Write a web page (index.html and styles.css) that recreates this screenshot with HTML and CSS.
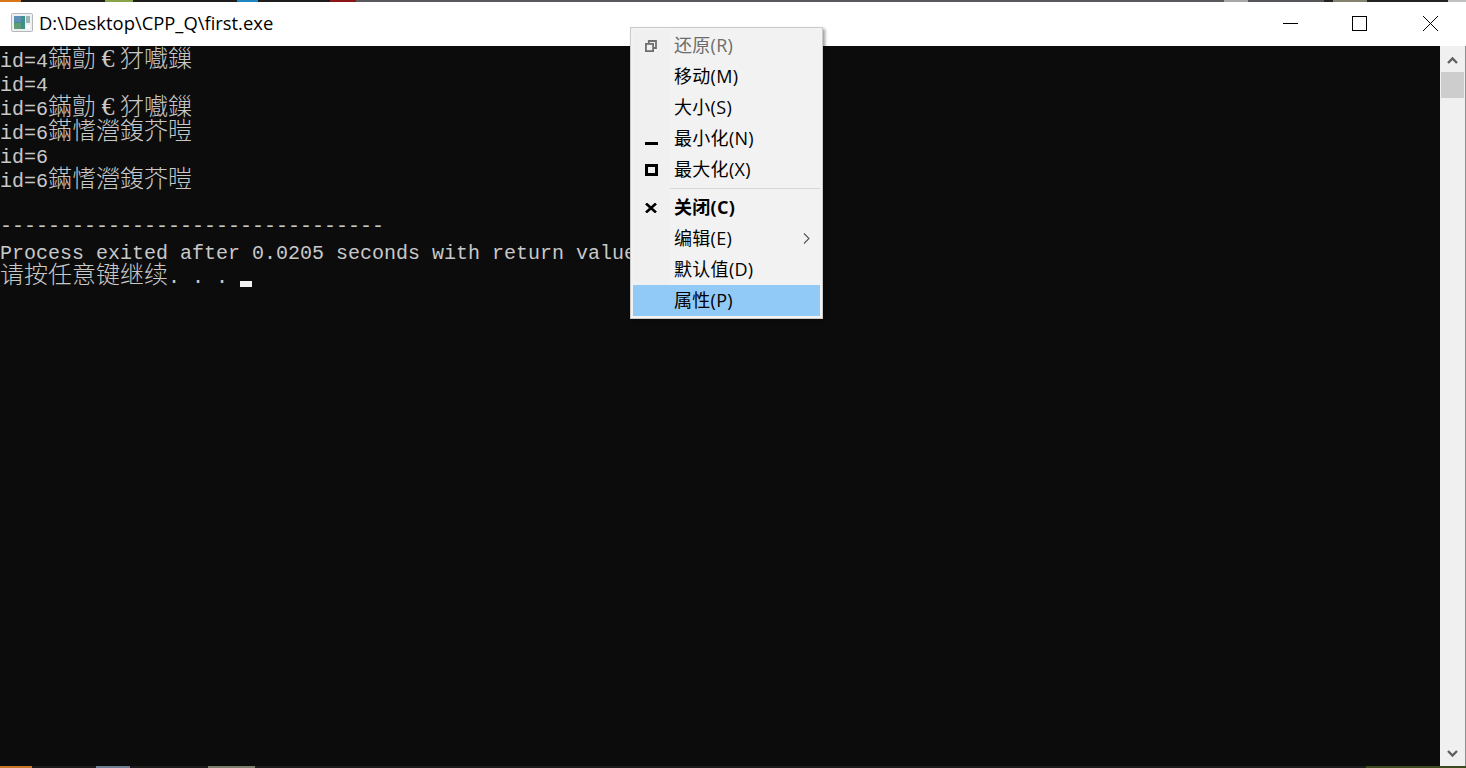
FILE: index.html
```html
<!DOCTYPE html>
<html lang="zh-CN">
<head>
<meta charset="utf-8">
<title>first.exe</title>
<link rel="stylesheet" href="styles.css">
</head>
<body>
<div class="window">
  <div class="strip strip-top"></div>
  <header class="titlebar">
    <svg class="app-icon" width="23" height="20" viewBox="0 0 23 20">
      <rect x="0.5" y="0.5" width="21" height="18" rx="1" fill="#eef0f2" stroke="#b4b8bc"/>
      <rect x="3" y="3" width="11" height="13" fill="#3f8f8c"/>
      <rect x="3" y="3" width="7" height="6" fill="#5f8fb5"/>
      <rect x="3" y="10" width="7" height="6" fill="#5e9e74"/>
      <rect x="15" y="3" width="4" height="7" fill="#9ab9b4"/>
      <rect x="15" y="12" width="4" height="4" fill="#ffffff"/>
    </svg>
    <span class="title">D:\Desktop\CPP_Q\first.exe</span>
    <div class="controls">
      <svg class="ctl" width="15" height="15" viewBox="0 0 15 15"><path d="M0 7.5H15" stroke="#000" fill="none"/></svg>
      <svg class="ctl ctl-max" width="15" height="15" viewBox="0 0 15 15"><rect x="0.5" y="0.5" width="14" height="14" fill="none" stroke="#000"/></svg>
      <svg class="ctl ctl-close" width="15" height="15" viewBox="0 0 15 15"><path d="M0 0L15 15M15 0L0 15" stroke="#000" fill="none"/></svg>
    </div>
  </header>
  <main class="body">
    <div class="console">
      <div class="line">id=4<span class="cjk">鏋勯</span><span class="wide">€</span><span class="cjk">犲嚱鏁</span></div>
      <div class="line">id=4</div>
      <div class="line">id=6<span class="cjk">鏋勯</span><span class="wide">€</span><span class="cjk">犲嚱鏁</span></div>
      <div class="line">id=6<span class="cjk">鏋愭瀯鍑芥暟</span></div>
      <div class="line">id=6</div>
      <div class="line">id=6<span class="cjk">鏋愭瀯鍑芥暟</span></div>
      <div class="line"></div>
      <div class="line"><span class="rule">--------------------------------</span></div>
      <div class="line">Process exited after 0.0205 seconds with return value 0</div>
      <div class="line"><span class="cjk">请按任意键继续</span>. . . <span class="cursor"></span></div>
    </div>
    <aside class="scrollbar">
      <svg class="arrow" width="11" height="9" viewBox="0 0 11 9"><path d="M1 7L5.5 2.5L10 7" fill="none" stroke="#606060" stroke-width="2.4"/></svg>
      <div class="thumb"></div>
      <svg class="arrow arrow-down" width="11" height="9" viewBox="0 0 11 9"><path d="M1 2L5.5 6.5L10 2" fill="none" stroke="#606060" stroke-width="2.4"/></svg>
    </aside>
  </main>
  <div class="strip strip-bottom"></div>

  <nav class="menu">
    <div class="item disabled">
      <span class="gutter"><svg width="12" height="12" viewBox="0 0 12 12"><path d="M3.8 3V1H11V8H9" fill="none" stroke="#707070" stroke-width="1.8"/><rect x="0.9" y="3.9" width="7.2" height="7.2" fill="none" stroke="#707070" stroke-width="1.8"/></svg></span>
      <span class="label">还原(R)</span>
    </div>
    <div class="item"><span class="gutter"></span><span class="label">移动(M)</span></div>
    <div class="item"><span class="gutter"></span><span class="label">大小(S)</span></div>
    <div class="item">
      <span class="gutter"><svg class="i-min" width="13" height="3" viewBox="0 0 13 3"><rect width="13" height="3" fill="#000"/></svg></span>
      <span class="label">最小化(N)</span>
    </div>
    <div class="item">
      <span class="gutter"><svg width="13" height="12" viewBox="0 0 13 12"><rect x="1.5" y="1.5" width="10" height="9" fill="none" stroke="#000" stroke-width="3"/></svg></span>
      <span class="label">最大化(X)</span>
    </div>
    <div class="sep"><span class="sep-gutter"></span><span class="sep-line"></span></div>
    <div class="item">
      <span class="gutter"><svg width="12" height="10" viewBox="0 0 12 10"><path d="M1 0.5L11 9.5M11 0.5L1 9.5" fill="none" stroke="#000" stroke-width="2.6"/></svg></span>
      <span class="label bold">关闭(C)</span>
    </div>
    <div class="item">
      <span class="gutter"></span><span class="label">编辑(E)</span>
      <svg class="sub" width="7" height="11" viewBox="0 0 7 11"><path d="M1 0.5L6 5.5L1 10.5" fill="none" stroke="#555" stroke-width="1.1"/></svg>
    </div>
    <div class="item"><span class="gutter"></span><span class="label">默认值(D)</span></div>
    <div class="item active"><span class="gutter"></span><span class="label">属性(P)</span></div>
  </nav>
</div>
</body>
</html>
```
FILE: styles.css
```css
* { box-sizing: border-box; }
html, body { margin: 0; padding: 0; height: 100%; overflow: hidden; background: #0c0c0c; }
.window {
  position: relative;
  display: flex;
  flex-direction: column;
  width: 1466px;
  height: 768px;
}
.strip { height: 2px; flex: none; }
.strip-top {
  background: linear-gradient(90deg,
    #d9761a 0 21px, #1d1d1d 21px 105px, #8aa34a 105px 133px, #1d1d1d 133px 237px,
    #1f86c4 237px 258px, #1d1d1d 258px 330px, #8c1616 330px 356px, #5a5a5e 356px 1224px,
    #a6a6a6 1224px 1248px, #55555a 1248px 1324px, #222 1324px 1333px,
    #85826f 1333px 1367px, #222 1367px 1448px, #c0c0c0 1448px 1466px);
}
.strip-bottom {
  background: linear-gradient(90deg,
    #c9782a 0 32px, #1c1c1c 32px 96px, #6f7f95 96px 130px, #1c1c1c 130px 208px,
    #7f7f70 208px 255px, #1c1c1c 255px 1366px, #3c4a22 1366px 1466px);
}
.titlebar {
  flex: none;
  height: 44px;
  display: flex;
  align-items: center;
  background: #fff;
  padding-left: 11px;
  padding-bottom: 2px;
}
.app-icon { flex: none; }
.title {
  margin-left: 5px;
  font: 18.4px/24px "Open Sans", "Liberation Sans", sans-serif;
  color: #000;
  white-space: nowrap;
}
.controls {
  margin-left: auto;
  padding-right: 28px;
  display: flex;
  align-items: center;
}
.ctl { display: block; }
.ctl-max { margin-left: 54px; }
.ctl-close { margin-left: 56px; }
.body { flex: 1; min-height: 0; display: flex; }
.console {
  flex: 1;
  min-width: 0;
  background: #0c0c0c;
  color: #c8c8c8;
  font: 20px/22px "Liberation Mono", monospace;
}
.line { height: 24px; white-space: pre; }
.line::before {
  content: "\200b";
  font-family: "Noto Sans CJK SC", sans-serif;
  font-size: 24px;
  line-height: 22px;
}
.rule { vertical-align: 3px; }
.cjk {
  font-family: "Noto Sans CJK SC", sans-serif;
  font-size: 24px;
  font-weight: 300;
  line-height: 22px;
}
.wide {
  display: inline-block;
  width: 24px;
  text-align: center;
  font-family: "Liberation Serif", serif;
  font-size: 26px;
  line-height: 22px;
}
.cursor {
  display: inline-block;
  width: 12px;
  height: 6px;
  background: #f2f2f2;
  vertical-align: -4px;
}
.scrollbar {
  flex: none;
  width: 26px;
  background: #f0f0f0;
  border-right: 1px solid #8f8f8f;
  display: flex;
  flex-direction: column;
  align-items: center;
  padding-top: 10px;
  padding-bottom: 8px;
}
.arrow { flex: none; display: block; }
.thumb {
  flex: none;
  width: 23px;
  height: 26px;
  margin-top: 7px;
  background: #cdcdcd;
}
.arrow-down { margin-top: auto; }
.menu {
  position: absolute;
  left: 630px;
  top: 27px;
  width: 193px;
  height: 292px;
  padding: 2px;
  background: #f2f2f2;
  border: 1px solid #cbcbcb;
  box-shadow: 2px 2px 3px rgba(0, 0, 0, .4);
  color: #000;
  font: 18px/29px "Open Sans", "Noto Sans CJK SC", sans-serif;
}
.item {
  position: relative;
  display: flex;
  align-items: center;
  height: 31px;
}
.gutter {
  flex: none;
  width: 37px;
  height: 31px;
  margin-right: 4px;
  padding-left: 12px;
  display: flex;
  align-items: center;
  background: #f0f0f0;
}
.gutter svg { display: block; }
.i-min { margin-top: 9px; }
.label { letter-spacing: .3px; white-space: nowrap; }
.bold { font-weight: 700; }
.disabled .label { color: #6d6d6d; }
.active { background: #91c9f7; }
.active .gutter { background: transparent; }
.sub { position: absolute; left: 170px; top: 10px; }
.sep { display: flex; height: 7px; }
.sep-gutter { width: 37px; background: #f0f0f0; }
.sep-line { flex: 1; height: 1px; margin-top: 3px; background: #d7d7d7; }
```
